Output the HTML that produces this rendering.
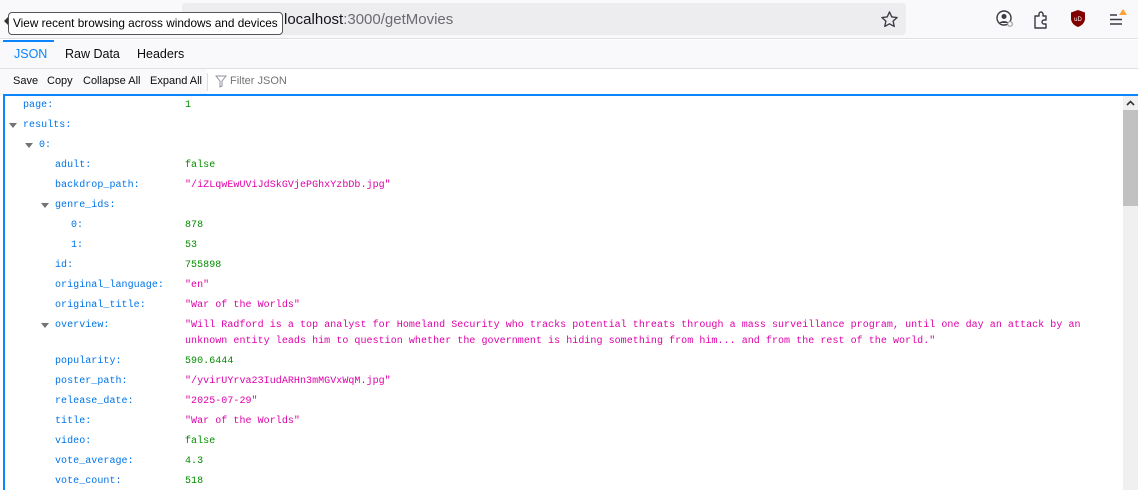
<!DOCTYPE html>
<html><head><meta charset="utf-8"><style>
*{margin:0;padding:0;box-sizing:border-box}
body{width:1138px;height:490px;overflow:hidden;background:#fff;font-family:"Liberation Sans",sans-serif;position:relative}
.top{position:absolute;left:0;top:0;width:1138px;height:39px;background:#f9f9fb;border-bottom:1px solid #e0e0e2}
.url{position:absolute;left:182px;top:3px;width:724px;height:32px;background:#ededf0;border-radius:4px}
.urltext{position:absolute;left:284px;top:11px;font-size:15px;color:#15141a}
.urltext span{color:#6b6b70}
.tip{position:absolute;left:8px;top:12px;height:23px;border:1px solid #555;border-radius:4px;background:#fff;font-size:11.8px;line-height:21px;padding:0 4px;color:#000;white-space:nowrap}
.tabs{position:absolute;top:40px;left:0;width:1138px;height:29px;background:#f9f9fb;border-bottom:1px solid #e0e0e2}
.tab{position:absolute;top:7px;font-size:12.5px;color:#0c0c0d}
.tabline{position:absolute;left:3px;top:40px;width:51px;height:2px;background:#0a84ff}
.tb{position:absolute;top:69px;left:0;height:25px;width:207px;background:#f9f9fb}
.tbi{position:absolute;top:75px;font-size:11px;color:#0c0c0d}
.content{position:absolute;left:3px;top:94px;width:1135px;height:396px;border-top:2px solid #0a84ff;border-left:2px solid #0a84ff}
.sb{position:absolute;left:1123px;top:96px;width:15px;height:394px;background:#f0f0f0}
.thumb{position:absolute;left:1123px;top:110px;width:15px;height:96px;background:#c1c1c1}
.r{position:absolute;font-family:"Liberation Mono",monospace;font-size:10px;letter-spacing:0.05px;line-height:16px;white-space:pre;margin-top:2px}
.k{color:#0074e8}.s{color:#dd00a9}.n{color:#058b00}
.tw{position:absolute;width:0;height:0;border-left:4px solid transparent;border-right:4px solid transparent;border-top:5px solid #737373;margin-top:1px}
</style></head><body>
<div class="top"></div>
<div class="url"></div>
<div class="urltext">localhost<span>:3000/getMovies</span></div>
<div class="tip">View recent browsing across windows and devices</div>
<div style="position:absolute;left:4px;top:17px;width:0;height:0;border-top:4px solid transparent;border-bottom:4px solid transparent;border-right:4px solid #333"></div>
<svg style="position:absolute;left:880px;top:10px" width="19" height="19" viewBox="0 0 20 20"><path d="M10 2l2.4 5.3 5.6.6-4.2 3.8 1.2 5.6L10 14.5 5 17.3l1.2-5.6L2 7.9l5.6-.6z" fill="none" stroke="#3a3944" stroke-width="1.4" stroke-linejoin="round"/></svg>
<svg style="position:absolute;left:995px;top:9px" width="20" height="20" viewBox="0 0 20 20"><circle cx="9" cy="9" r="7" fill="none" stroke="#3a3944" stroke-width="1.4"/><circle cx="9" cy="7.5" r="2.5" fill="#3a3944"/><path d="M4.5 14c1-2.5 8-2.5 9 0" fill="#3a3944"/><circle cx="15" cy="15" r="2.3" fill="#fff" stroke="#999" stroke-width="1.2"/></svg>
<svg style="position:absolute;left:1032px;top:10px" width="18" height="19" viewBox="0 0 18 19"><path d="M3 6h4V4a2 2 0 014 0v2h3v4h-2a2 2 0 000 4h2v4H3z" fill="none" stroke="#3a3944" stroke-width="1.4" stroke-linejoin="round"/></svg>
<svg style="position:absolute;left:1070px;top:9px" width="16" height="19" viewBox="0 0 16 19"><path d="M8 1l7 2.5v6c0 4-3 7-7 8.5C4 16.5 1 13.5 1 9.5v-6z" fill="#800000"/><text x="8" y="12" font-size="6" fill="#fff" text-anchor="middle" font-family="Liberation Sans">uD</text></svg>
<svg style="position:absolute;left:1108px;top:8px" width="22" height="18" viewBox="0 0 22 18"><path d="M2 7h7M2 11.5h12M2 16h12" stroke="#3a3944" stroke-width="1.4"/><path d="M15 1l4 6h-8z" fill="#ffa436"/></svg>
<div class="tabs"></div>
<div class="tabline"></div>
<div class="tab" style="left:14px;color:#0a84ff;top:47px">JSON</div>
<div class="tab" style="left:65px;top:47px">Raw Data</div>
<div class="tab" style="left:137px;top:47px">Headers</div>
<div class="tb"></div>
<div class="tbi" style="left:13px">Save</div>
<div class="tbi" style="left:47px">Copy</div>
<div class="tbi" style="left:83px">Collapse All</div>
<div class="tbi" style="left:150px">Expand All</div>
<div style="position:absolute;left:207px;top:73px;width:1px;height:18px;background:#ddd"></div>
<svg style="position:absolute;left:215px;top:75px" width="12" height="13" viewBox="0 0 12 13"><path d="M1 1h10L7 6v5L5 12V6z" fill="none" stroke="#8f8f9d" stroke-width="1"/></svg>
<div class="tbi" style="left:230px;color:#737373">Filter JSON</div>
<div class="content"></div>
<div class="sb"></div>
<div class="thumb"></div>
<svg style="position:absolute;left:1125px;top:98px" width="11" height="10" viewBox="0 0 11 10"><path d="M2 7l3.5-3.5L9 7" fill="none" stroke="#333" stroke-width="1.6"/></svg>

<div class="r k" style="left:23px;top:96px">page:</div><div class="r n" style="left:185px;top:96px">1</div>
<div class="tw" style="left:9px;top:122px"></div><div class="r k" style="left:23px;top:116px">results:</div>
<div class="tw" style="left:25px;top:142px"></div><div class="r k" style="left:39px;top:136px">0:</div>
<div class="r k" style="left:55px;top:156px">adult:</div><div class="r n" style="left:185px;top:156px">false</div>
<div class="r k" style="left:55px;top:176px">backdrop_path:</div><div class="r s" style="left:185px;top:176px">"/iZLqwEwUViJdSkGVjePGhxYzbDb.jpg"</div>
<div class="tw" style="left:41px;top:202px"></div><div class="r k" style="left:55px;top:196px">genre_ids:</div>
<div class="r k" style="left:71px;top:216px">0:</div><div class="r n" style="left:185px;top:216px">878</div>
<div class="r k" style="left:71px;top:236px">1:</div><div class="r n" style="left:185px;top:236px">53</div>
<div class="r k" style="left:55px;top:256px">id:</div><div class="r n" style="left:185px;top:256px">755898</div>
<div class="r k" style="left:55px;top:276px">original_language:</div><div class="r s" style="left:185px;top:276px">"en"</div>
<div class="r k" style="left:55px;top:296px">original_title:</div><div class="r s" style="left:185px;top:296px">"War of the Worlds"</div>
<div class="tw" style="left:41px;top:322px"></div><div class="r k" style="left:55px;top:316px">overview:</div>
<div class="r s" style="left:185px;top:316px">"Will Radford is a top analyst for Homeland Security who tracks potential threats through a mass surveillance program, until one day an attack by an</div>
<div class="r s" style="left:185px;top:332px">unknown entity leads him to question whether the government is hiding something from him... and from the rest of the world."</div>
<div class="r k" style="left:55px;top:352px">popularity:</div><div class="r n" style="left:185px;top:352px">590.6444</div>
<div class="r k" style="left:55px;top:372px">poster_path:</div><div class="r s" style="left:185px;top:372px">"/yvirUYrva23IudARHn3mMGVxWqM.jpg"</div>
<div class="r k" style="left:55px;top:392px">release_date:</div><div class="r s" style="left:185px;top:392px">"2025-07-29"</div>
<div class="r k" style="left:55px;top:412px">title:</div><div class="r s" style="left:185px;top:412px">"War of the Worlds"</div>
<div class="r k" style="left:55px;top:432px">video:</div><div class="r n" style="left:185px;top:432px">false</div>
<div class="r k" style="left:55px;top:452px">vote_average:</div><div class="r n" style="left:185px;top:452px">4.3</div>
<div class="r k" style="left:55px;top:472px">vote_count:</div><div class="r n" style="left:185px;top:472px">518</div>
</body></html>
